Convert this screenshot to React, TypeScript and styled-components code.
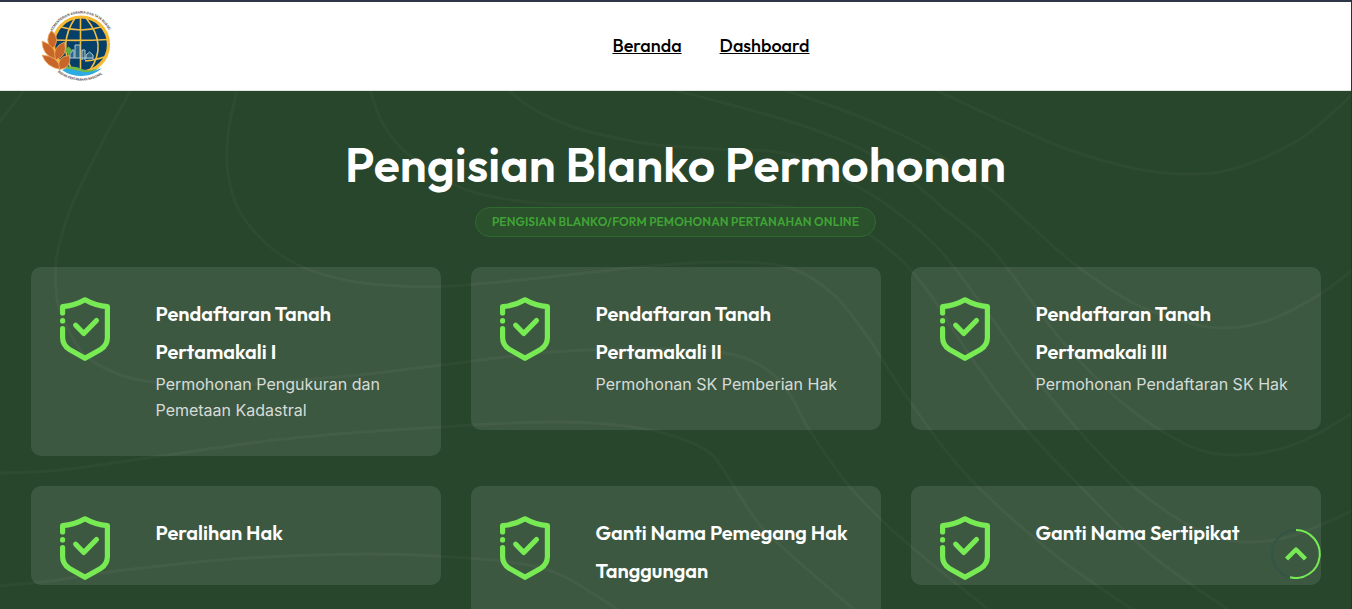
import React from 'react';
import styled, { createGlobalStyle } from 'styled-components';

const GlobalStyle = createGlobalStyle`
  * { box-sizing: border-box; }
  html, body { margin: 0; padding: 0; }
  body { overflow: hidden; font-family: Inter, sans-serif; background: #28462c; }
`;

const display = `Outfit, Lato, sans-serif`;

const Page = styled.div`
  height: 609px;
  display: flex;
  flex-direction: column;
  overflow: hidden;
  border-top: 2px solid #2d3748;
  border-right: 1px solid #2b3033;
`;

const Header = styled.header`
  flex: none;
  height: 89px;
  display: grid;
  grid-template-columns: 1fr auto 1fr;
  align-items: center;
  padding: 0 30px;
  background: #fff;
  border-bottom: 1px solid #dfe5e0;
`;

const LogoLink = styled.a`
  display: block;
  width: 80px;
  height: 76px;
  margin-left: 7px;
`;

const Nav = styled.nav`
  display: flex;
  gap: 38px;
  margin-left: 71px;
`;

const NavLink = styled.a`
  font: 500 18px/24px ${display};
  color: #000;
  text-decoration: underline;
`;

const Hero = styled.main`
  position: relative;
  flex: 1;
  min-height: 0;
  overflow: hidden;
  padding: 44px 30px 0;
  background: #28462c;
`;

const Contours = styled.svg`
  position: absolute;
  left: 0;
  top: 0;
`;

const Heading = styled.div`
  position: relative;
  display: flex;
  flex-direction: column;
  align-items: center;
  gap: 14px;
`;

const Title = styled.h1`
  margin: 0;
  font: 600 48px/58px ${display};
  letter-spacing: 0.15px;
  color: #fff;
  white-space: nowrap;
`;

const Pill = styled.span`
  width: 401px;
  height: 30px;
  display: flex;
  align-items: center;
  justify-content: center;
  border: 1px solid #2f6a30;
  border-radius: 15px;
  background: #2a502c;
  font: 600 12px/28px ${display};
  letter-spacing: 0.1px;
  color: #40a335;
  white-space: nowrap;
`;

const Grid = styled.section`
  position: relative;
  display: grid;
  grid-template-columns: repeat(3, 410px);
  gap: 30px;
  align-items: start;
  margin: 30px 0 0 1px;
`;

const Card = styled.article`
  display: flex;
  gap: 45.5px;
  padding: 28px 20px 33px 29px;
  border-radius: 10px;
  background: rgba(255, 255, 255, 0.1);
`;

const Shield = styled.svg`
  flex: none;
  width: 50px;
  height: 64px;
  margin: 2px 0 -30px;
`;

const CardTitle = styled.h2`
  margin: 0;
  font: 600 20px/38px ${display};
  color: #fff;
`;

const CardText = styled.p`
  margin: 0;
  font: 400 16px/26px Inter, sans-serif;
  color: rgba(255, 255, 255, 0.8);
`;

const ScrollTop = styled.button`
  position: absolute;
  right: 30px;
  bottom: 30px;
  width: 50px;
  height: 50px;
  padding: 0;
  border: 0;
  background: none;
`;

type Point = [number, number];

/* Contour lines of the hero background, in page coordinates. */
const contours: Point[][] = [
  [[24, 90], [12, 106], [-2, 124]],
  [[131, 90], [103, 141], [72, 205], [57, 255], [56, 290], [62, 316], [83, 353], [113, 372], [153, 382], [230, 385], [347, 376], [450, 364], [540, 353], [620, 349], [700, 350], [745, 358], [775, 376], [792, 398], [810, 431], [850, 487], [900, 537], [990, 611]],
  [[237, 90], [228, 134], [228, 174], [240, 212], [267, 244], [300, 266], [350, 281], [400, 286], [450, 286], [550, 277], [650, 266], [733, 262], [790, 268], [833, 294], [867, 336], [900, 387], [940, 443], [980, 489], [1060, 559], [1135, 611]],
  [[370, 90], [383, 124], [408, 154], [457, 186], [500, 198], [550, 204], [650, 204], [733, 203], [790, 207], [830, 217], [865, 232], [900, 259], [930, 294], [975, 363], [1027, 430], [1080, 486], [1150, 554], [1230, 611]],
  [[508, 90], [530, 107], [560, 122], [590, 132], [650, 144], [717, 149], [783, 153], [830, 173], [883, 202], [937, 247], [980, 302], [1027, 367], [1080, 432], [1133, 486], [1183, 522], [1220, 538], [1253, 542], [1295, 535], [1354, 510]],
  [[674, 90], [750, 110], [810, 128], [863, 150], [910, 180], [943, 208], [990, 247], [1030, 299], [1067, 347], [1117, 398], [1160, 430], [1200, 450], [1237, 455], [1280, 449], [1315, 435], [1354, 412]],
  [[784, 90], [840, 109], [900, 134], [943, 157], [987, 187], [1030, 225], [1073, 263], [1133, 303], [1183, 321], [1220, 328], [1267, 321], [1317, 296], [1354, 269]],
  [[936, 90], [1000, 120], [1067, 149], [1133, 168], [1183, 174], [1233, 169], [1300, 139], [1354, 93]],
  [[-2, 473], [50, 471], [100, 465], [167, 455], [267, 441], [350, 433], [440, 427], [510, 423], [567, 422], [617, 425], [667, 434], [710, 453], [733, 485], [760, 525], [800, 563], [856, 611]],
  [[-2, 586], [50, 581], [117, 571], [233, 559], [367, 554], [450, 557], [517, 563], [563, 576], [620, 611]],
];

function smooth(points: Point[]): string {
  let d = `M${points[0][0]} ${points[0][1]}`;
  for (let i = 0; i < points.length - 1; i++) {
    const a = points[Math.max(i - 1, 0)];
    const b = points[i];
    const c = points[i + 1];
    const e = points[Math.min(i + 2, points.length - 1)];
    d += ` C${b[0] + (c[0] - a[0]) / 6} ${b[1] + (c[1] - a[1]) / 6} ${c[0] - (e[0] - b[0]) / 6} ${c[1] - (e[1] - b[1]) / 6} ${c[0]} ${c[1]}`;
  }
  return d;
}

function Logo() {
  return (
    <svg width="80" height="76" viewBox="37 8 80 76" fill="none">
      <defs>
        <path id="arcTop" d="M52.500 31A31.800 31.800 0 0 1 109.500 31.500" />
        <path id="arcBottom" d="M57 71.500A37 37 0 0 0 104 73" />
      </defs>
      <circle cx="81" cy="44.500" r="27.500" fill="#063f68" stroke="#f6b932" strokeWidth="3.200" />
      <g stroke="#f1bd45" strokeWidth="1.600">
        <path d="M80.500 17V72M61 27Q81 33 101 27M54 40Q81 41 108 39.500M85 61Q96 60 104 57" />
        <path d="M75 18Q58 44 72 70M86 18Q108 45 90 70" />
      </g>
      <path d="M70 58V53l2-1v-2h2v8M75 58V45h5v13M82 60V50h3v10M86 59v-4l3.500-3L93 55v5M68 58h25" stroke="#b3c8d2" strokeWidth="1" fill="#2c6685" />
      <path d="M62 70Q72 65 81 69.500Q92 73 102 68Q95 75 82 76Q70 76 62 70Z" fill="#2daae1" />
      <path d="M61 67.500Q74 64.500 83 69.500Q92 72 101 67Q91 74 82 71.500Q71 69 61 67.500Z" fill="#72b94a" />
      <path d="M68.500 46.500L72.500 50.500L68.500 54.500L64.500 50.500Z" fill="#5faf46" />
      <path d="M68.500 52V58" stroke="#5faf46" strokeWidth="1.200" />
      <g fill="#c8662a" stroke="#f1b565" strokeWidth="0.700">
        <path d="M51.500 30.500Q44 39 51.500 50Q62 40 51.500 30.500Z" />
        <path d="M42 41Q42 55 55.500 59.500Q57 46 42 41Z" />
        <path d="M64.500 42Q51.500 47 55.500 60Q68.500 56 64.500 42Z" />
        <path d="M42 55Q46 67 60.500 69.500Q59 56 42 55Z" />
        <path d="M69.500 55.500Q56 56 59.500 69.500Q72 68 69.500 55.500Z" />
      </g>
      <g fill="#4a4a4a" fontFamily="Liberation Sans, sans-serif" fontWeight="700" fontSize="3.6">
        <text textLength="69" lengthAdjust="spacingAndGlyphs"><textPath href="#arcTop">KEMENTERIAN AGRARIA DAN TATA RUANG</textPath></text>
        <text textLength="48" lengthAdjust="spacingAndGlyphs"><textPath href="#arcBottom" startOffset="1">BADAN PERTANAHAN NASIONAL</textPath></text>
      </g>
    </svg>
  );
}

function ShieldIcon() {
  return (
    <Shield viewBox="0 0 50 64" fill="none" stroke="#78eb54" strokeWidth="5.2" strokeLinecap="round" strokeLinejoin="round">
      <path d="M2.600 16V9.600C10 9.200 18 6.800 25 2.800C32 6.800 40 9.200 47.400 9.600V40.500C47.400 45.500 45 49.500 41 52.200L25 61.300L9 52.200C5 49.500 2.600 45.500 2.600 40.500V31.500M2.600 23.700V23.900" />
      <path d="M15.700 28.200L23.800 36.500L36.500 23.500" />
    </Shield>
  );
}

interface Service {
  title: string;
  text?: string;
}

const services: Service[] = [
  { title: 'Pendaftaran Tanah Pertamakali I', text: 'Permohonan Pengukuran dan Pemetaan Kadastral' },
  { title: 'Pendaftaran Tanah Pertamakali II', text: 'Permohonan SK Pemberian Hak' },
  { title: 'Pendaftaran Tanah Pertamakali III', text: 'Permohonan Pendaftaran SK Hak' },
  { title: 'Peralihan Hak' },
  { title: 'Ganti Nama Pemegang Hak Tanggungan' },
  { title: 'Ganti Nama Sertipikat' },
];

export default function App() {
  return (
    <Page>
      <GlobalStyle />
      <Header>
        <LogoLink><Logo /></LogoLink>
        <Nav>
          <NavLink>Beranda</NavLink>
          <NavLink>Dashboard</NavLink>
        </Nav>
      </Header>
      <Hero>
        <Contours width="1351" height="518" viewBox="0 91 1351 518" fill="none" stroke="#fff" strokeOpacity="0.033" strokeWidth="3">
          {contours.map((points, i) => <path key={i} d={smooth(points)} />)}
        </Contours>
        <Heading>
          <Title>Pengisian Blanko Permohonan</Title>
          <Pill>PENGISIAN BLANKO/FORM PEMOHONAN PERTANAHAN ONLINE</Pill>
        </Heading>
        <Grid>
          {services.map((service) => (
            <Card key={service.title}>
              <ShieldIcon />
              <div>
                <CardTitle>{service.title}</CardTitle>
                {service.text && <CardText>{service.text}</CardText>}
              </div>
            </Card>
          ))}
        </Grid>
        <ScrollTop aria-label="Scroll to top">
          <svg width="50" height="50" viewBox="0 0 50 50" fill="none">
            <circle cx="25" cy="25" r="24" stroke="#335547" strokeWidth="2" />
            <path d="M25 1A24 24 0 1 1 19 48.300" stroke="#78eb54" strokeWidth="2" />
            <path d="M15.500 30L25 20.500L34.500 30" stroke="#78eb54" strokeWidth="4.400" strokeLinejoin="round" />
          </svg>
        </ScrollTop>
      </Hero>
    </Page>
  );
}
